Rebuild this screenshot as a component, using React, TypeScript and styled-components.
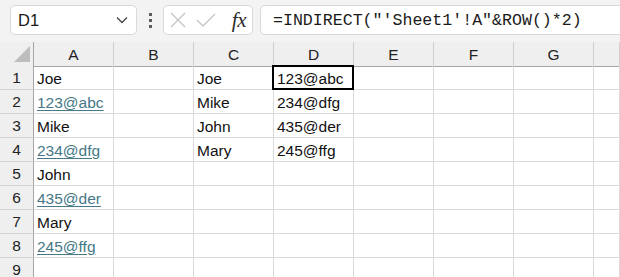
import { Fragment } from 'react'
import styled, { createGlobalStyle } from 'styled-components'

const GlobalStyle = createGlobalStyle`
  html, body {
    margin: 0;
    padding: 0;
    background: #ffffff;
    overflow: hidden;
  }
  body {
    font-family: 'Liberation Sans', Arial, sans-serif;
  }
`

const Page = styled.div`
  width: 620px;
  height: 277px;
  overflow: hidden;
  background: #ffffff;
`

const FormulaBar = styled.div`
  height: 42px;
  box-sizing: border-box;
  padding: 5px 0 7px 10px;
  display: flex;
  align-items: stretch;
  background: #f3f3f3;
`

const NameBox = styled.div`
  width: 127px;
  box-sizing: border-box;
  display: flex;
  align-items: center;
  justify-content: space-between;
  padding: 0 8px 0 7px;
  background: #ffffff;
  border: 1px solid #d9d9d9;
  border-radius: 5px;
  font-size: 16.5px;
  color: #1a1a1a;
`

const Grip = styled.div`
  width: 26px;
  display: flex;
  flex-direction: column;
  align-items: center;
  justify-content: center;
  gap: 3px;
`

const GripDot = styled.span`
  width: 3px;
  height: 3px;
  background: #5c5c5c;
`

const ActionBox = styled.div`
  width: 90px;
  box-sizing: border-box;
  display: flex;
  align-items: center;
  gap: 8px;
  padding: 0 6px 0 5px;
  background: #ffffff;
  border: 1px solid #d9d9d9;
  border-radius: 5px;
`

const FxLabel = styled.span`
  margin-left: auto;
  font-family: 'Liberation Serif', 'Times New Roman', serif;
  font-style: italic;
  font-size: 21px;
  color: #2b2b2b;
  letter-spacing: -0.5px;
`

const FormulaInput = styled.div`
  flex: 1;
  margin-left: 7px;
  margin-right: -8px;
  display: flex;
  align-items: center;
  padding-left: 12px;
  background: #ffffff;
  border: 1px solid #d9d9d9;
  border-radius: 5px;
  font-family: 'Liberation Mono', 'Courier New', monospace;
  font-size: 16.6px;
  color: #1a1a1a;
  white-space: pre;
`

const Sheet = styled.div`
  display: grid;
  grid-template-columns: 34px repeat(7, 80px) 1fr;
  grid-auto-rows: 24px;
`

const Corner = styled.div`
  background: #efefef;
  border-right: 1px solid #a6a6a6;
  border-bottom: 1px solid #a6a6a6;
  height: 25px;
  box-sizing: border-box;
  display: flex;
  align-items: flex-end;
  justify-content: flex-end;
  padding: 0 3px 4px 0;
`

const ColHeader = styled.div`
  background: #efefef;
  height: 25px;
  box-sizing: border-box;
  border-right: 1px solid #d0d0d0;
  border-bottom: 1px solid #a6a6a6;
  display: flex;
  align-items: center;
  justify-content: center;
  font-size: 15.5px;
  color: #222222;
  padding-top: 1px;
`

const RowHeader = styled.div`
  background: #efefef;
  box-sizing: border-box;
  border-right: 1px solid #a6a6a6;
  border-bottom: 1px solid #d4d4d4;
  display: flex;
  align-items: center;
  justify-content: center;
  font-size: 15.5px;
  color: #222222;
  padding-top: 1px;
`

const Cell = styled.div<{ $link?: boolean; $selected?: boolean }>`
  position: relative;
  box-sizing: border-box;
  border-right: 1px solid #dadada;
  border-bottom: 1px solid #dadada;
  padding: 1px 0 0 3px;
  line-height: 23px;
  font-size: 15.5px;
  white-space: nowrap;
  color: ${(p) => (p.$link ? '#467886' : '#111111')};
  text-decoration: ${(p) => (p.$link ? 'underline' : 'none')};
  text-underline-offset: 2px;

  ${(p) =>
    p.$selected &&
    `
    &::after {
      content: '';
      position: absolute;
      left: -2px;
      top: -1px;
      right: -1px;
      bottom: -1px;
      border: 2px solid #000000;
    }
  `}
`

const cols = ['A', 'B', 'C', 'D', 'E', 'F', 'G', '']

type CellData = { text: string; link?: boolean }

const rows: Record<string, CellData>[] = [
  { A: { text: 'Joe' }, C: { text: 'Joe' }, D: { text: '123@abc' } },
  { A: { text: '123@abc', link: true }, C: { text: 'Mike' }, D: { text: '234@dfg' } },
  { A: { text: 'Mike' }, C: { text: 'John' }, D: { text: '435@der' } },
  { A: { text: '234@dfg', link: true }, C: { text: 'Mary' }, D: { text: '245@ffg' } },
  { A: { text: 'John' } },
  { A: { text: '435@der', link: true } },
  { A: { text: 'Mary' } },
  { A: { text: '245@ffg', link: true } },
  {},
]

const Chevron = () => (
  <svg width="12" height="8" viewBox="0 0 12 8">
    <path d="M1 1.5 L6 6.5 L11 1.5" fill="none" stroke="#444" strokeWidth="1.3" />
  </svg>
)

const CrossIcon = () => (
  <svg width="18" height="18" viewBox="0 0 18 18">
    <path d="M2 2 L16 16 M16 2 L2 16" stroke="#c4c4c4" strokeWidth="1.3" />
  </svg>
)

const CheckIcon = () => (
  <svg width="22" height="18" viewBox="0 0 22 18">
    <path d="M2 9 L8 15 L20 3" fill="none" stroke="#c4c4c4" strokeWidth="1.3" />
  </svg>
)

const CornerTriangle = () => (
  <svg width="16" height="16" viewBox="0 0 16 16">
    <path d="M16 0 L16 16 L0 16 Z" fill="#bdbdbd" />
  </svg>
)

export default function App() {
  return (
    <Page>
      <GlobalStyle />
      <FormulaBar>
        <NameBox>
          <span>D1</span>
          <Chevron />
        </NameBox>
        <Grip>
          <GripDot />
          <GripDot />
          <GripDot />
        </Grip>
        <ActionBox>
          <CrossIcon />
          <CheckIcon />
          <FxLabel>fx</FxLabel>
        </ActionBox>
        <FormulaInput>{`=INDIRECT("'Sheet1'!A"&ROW()*2)`}</FormulaInput>
      </FormulaBar>
      <Sheet>
        <Corner>
          <CornerTriangle />
        </Corner>
        {cols.map((c, i) => (
          <ColHeader key={i}>{c}</ColHeader>
        ))}
        {rows.map((row, r) => (
          <Fragment key={r}>
            <RowHeader>{r + 1}</RowHeader>
            {cols.map((c, i) => {
              const cell = row[c]
              return (
                <Cell
                  key={i}
                  $link={cell?.link}
                  $selected={r === 0 && c === 'D'}
                >
                  {cell?.text ?? ''}
                </Cell>
              )
            })}
          </Fragment>
        ))}
      </Sheet>
    </Page>
  )
}
